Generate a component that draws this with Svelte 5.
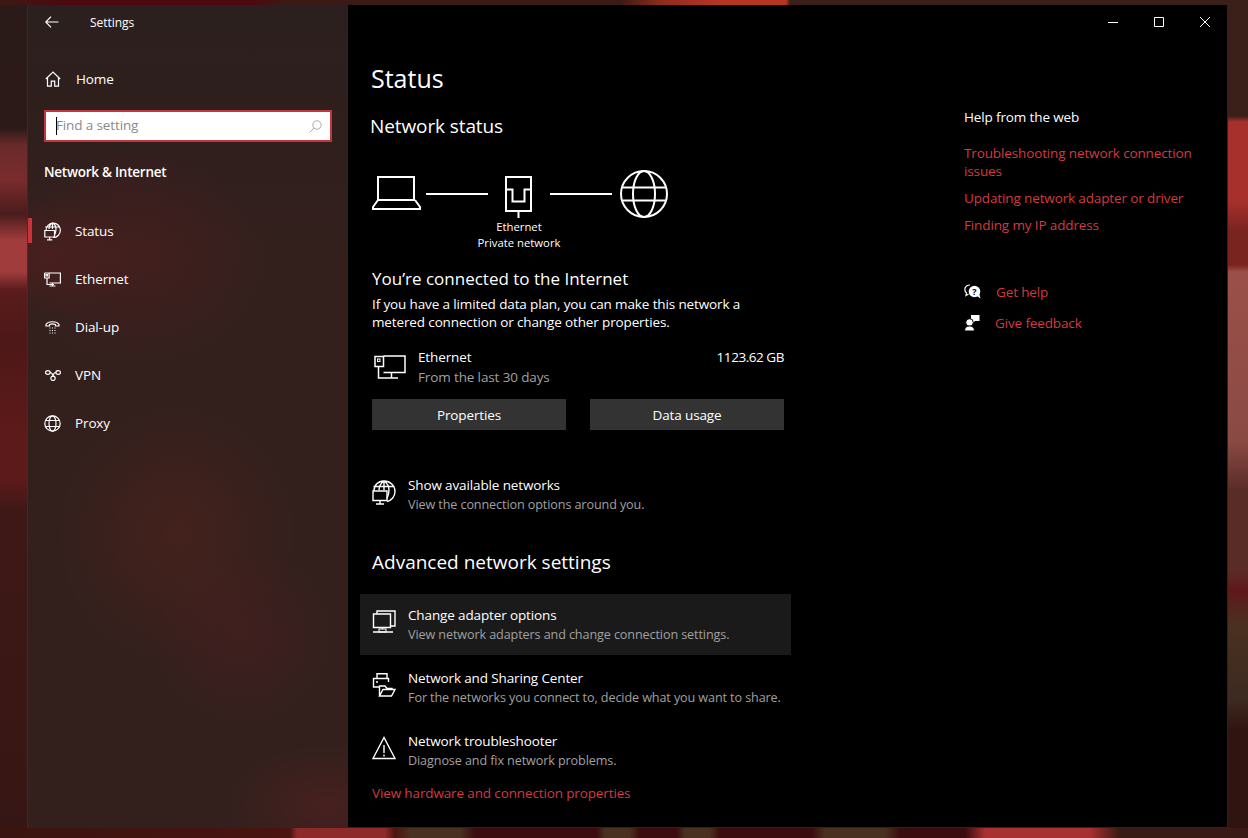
<script>
	const nav = ['Status', 'Ethernet', 'Dial-up', 'VPN', 'Proxy'];
	const links = [
		'Troubleshooting network connection issues',
		'Updating network adapter or driver',
		'Finding my IP address'
	];
</script>

<div class="desktop">
	<div class="window">
		<aside class="sidebar">
			<div class="titlebar">
				<svg class="back" width="14" height="12" viewBox="0 0 14 12"><path d="M13.5 6H1M6 .7 .8 6 6 11.3" /></svg>
				<span>Settings</span>
			</div>
			<div class="home">
				<svg width="16" height="16" viewBox="0 0 16 16"><path d="M.8 8 8 1l7.2 7M2.500 6.800v8.400h3.800v-5h3.400v5h3.800V6.800" /></svg>
				<span>Home</span>
			</div>
			<div class="search">
				<input placeholder="Find a setting" readonly />
				<i class="caret"></i>
				<svg width="13" height="13" viewBox="0 0 13 13"><circle cx="8" cy="5" r="4.200" /><path d="M5 8 .6 12.500" /></svg>
			</div>
			<h2>Network &amp; Internet</h2>
			<nav>
				{#each nav as item, i}
					<div class="nav-row" class:active={i === 0}>
						<span class="nav-icon">
							{#if i === 0}
								<svg width="17" height="19" viewBox="0 0 17 19"><path d="M2 8.500a7.200 7.200 0 1 1 7 7M1 5h15M8.500 1v6M5 7c0-3 1.500-5 3.500-6 2 1 3.500 3 3.500 6 0 2-.5 4-1.500 6" /><path d="M.8 8.500h9.700v6.500H.8zM5.600 15v2.500M3 17.800h5.300" /></svg>
							{:else if i === 1}
								<svg width="17" height="15" viewBox="0 0 17 15"><path d="M.6 1h15.800v10H5.500M.6 1v5h4.500V1M3 6v6.500h7M8.500 11v3M5.500 14h6" /><rect x="2" y="2.500" width="1.500" height="1.500" /></svg>
							{:else if i === 2}
								<svg width="15" height="14" viewBox="0 0 15 14"><path d="M1 6V4.500C3 .8 12 .8 14 4.500V6h-3.500V4.500c-1.500-.7-4.500-.7-6 0V6z" /><path class="dots" d="M4.500 8h6M4.500 10.500h6M4.500 13h6" /></svg>
							{:else if i === 3}
								<svg width="16" height="11" viewBox="0 0 16 11"><ellipse cx="2.800" cy="2.500" rx="2.300" ry="1.800" /><ellipse cx="13.200" cy="2.500" rx="2.300" ry="1.800" /><circle cx="8" cy="8.300" r="2.200" /><path d="M5 2.500c2 0 2.500 1 3 3.500M11 2.500c-2 0-2.500 1-3 3.500" /></svg>
							{:else}
								<svg width="17" height="17" viewBox="0 0 17 17"><circle cx="8.500" cy="8.500" r="7.700" /><ellipse cx="8.500" cy="8.500" rx="3.500" ry="7.700" /><path d="M1.500 5.500h14M1.500 11.500h14" /></svg>
							{/if}
						</span>
						<span>{item}</span>
					</div>
				{/each}
			</nav>
		</aside>

		<main class="panel">
			<div class="controls">
				<svg width="10" height="10" viewBox="0 0 10 10"><path d="M0 5.500h10" /></svg>
				<svg width="10" height="10" viewBox="0 0 10 10"><path d="M.5.500h9v9h-9z" /></svg>
				<svg width="10" height="10" viewBox="0 0 10 10"><path d="m0 0 10 10M10 0 0 10" /></svg>
			</div>
			<div class="columns">
				<section class="main-col">
					<h1>Status</h1>
					<h3 class="net-status">Network status</h3>

					<svg class="diagram" width="298" height="50" viewBox="0 0 298 50">
						<path d="M7 8h36v23H7zM7 31l-5 7v2h47v-2l-5-7" />
						<path d="M55 25h62M179 25h62" />
						<path d="M135 8h25v34h-25zM135 20.500h6.500v12h12v-12h6.500M147.500 42v7" />
						<circle cx="273" cy="25" r="23" />
						<ellipse cx="273" cy="25" rx="11" ry="23" />
						<path d="M252 18.500h42M252 31.500h42" />
					</svg>
					<div class="diagram-label">
						<div>Ethernet</div>
						<div>Private network</div>
					</div>

					<h4>You’re connected to the Internet</h4>
					<p class="intro">If you have a limited data plan, you can make this network a<br />metered connection or change other properties.</p>

					<div class="usage">
						<svg width="32" height="24" viewBox="0 0 32 24"><path d="M9.500 1H31v16.500H9.500M1 1.500h8.500v10H1zM4.500 11.500V23H11M17.500 17.500V23M11 23h13" /><rect x="3.500" y="4" width="2.500" height="2.500" /></svg>
						<div class="usage-text">
							<div>Ethernet</div>
							<div class="muted">From the last 30 days</div>
						</div>
						<div class="amount">1123.62 GB</div>
					</div>

					<div class="buttons">
						<button>Properties</button>
						<button>Data usage</button>
					</div>

					<div class="row show-networks">
						<svg width="24" height="25" viewBox="0 0 24 25"><path d="M2 11C2 5 6 1 12 1s11 4.500 11 10.500c0 5-3.500 9-8 10M1.500 6.500h21M12 1v9M7 10c0-4 2-7 5-9 3 2 5 5 5 9 0 3-.8 6-2 8.500" /><path d="M1 11h14v9.500H1zM8 20.500v3M4 24h8" /></svg>
						<div>
							<div class="row-title">Show available networks</div>
							<div class="muted">View the connection options around you.</div>
						</div>
					</div>

					<h3 class="advanced">Advanced network settings</h3>

					<div class="row item highlighted">
						<svg width="24" height="24" viewBox="0 0 24 24"><path d="M5 4V1h18v15h-4.500M1.500 4h17v13.500h-17zM10.500 17.500V19M1 22h20" /><rect x="7" y="19" width="7" height="3" /></svg>
						<div>
							<div class="row-title">Change adapter options</div>
							<div class="muted">View network adapters and change connection settings.</div>
						</div>
					</div>
					<div class="row item low">
						<svg width="24" height="24" viewBox="0 0 24 24"><path d="M5 6V.8h10V6M7 14H1.500V5.500h15V9M4 9h2" /><path d="M7.500 23V13H13l2 2.500h5v1M7.500 23h12l3.500-6.500H11z" /></svg>
						<div>
							<div class="row-title">Network and Sharing Center</div>
							<div class="muted">For the networks you connect to, decide what you want to share.</div>
						</div>
					</div>
					<div class="row item low">
						<svg width="24" height="24" viewBox="0 0 24 24"><path d="M12 1.500 1 22.500h22zM12 9v8M12 18.500v2" /></svg>
						<div>
							<div class="row-title">Network troubleshooter</div>
							<div class="muted">Diagnose and fix network problems.</div>
						</div>
					</div>
					<div class="link hardware">View hardware and connection properties</div>
				</section>

				<section class="help-col">
					<div class="help-title">Help from the web</div>
					{#each links as link}
						<div class="link help-link">{link}</div>
					{/each}
					<div class="support first">
						<svg width="17" height="16" viewBox="0 0 17 16"><path d="M6 1C3 1 .8 3 .8 5.500c0 1.500.7 2.600 1.700 3.400L2 11.500l2.500-1.500" /><circle class="solid" cx="10.500" cy="7.500" r="5.800" /><path class="solid" d="m13 12 3.500 2.500-1-4z" /><text x="10.500" y="10.800" text-anchor="middle">?</text></svg>
						<span class="link">Get help</span>
					</div>
					<div class="support">
						<svg width="16" height="16" viewBox="0 0 16 16"><path class="solid" d="M7 0h8.500v6H11L9 8V6H7z" /><circle class="cut" cx="5.500" cy="7.500" r="3.800" /><path class="cut" d="M.5 16c0-3.500 2-5 5-5s5 1.500 5 5z" /></svg>
						<span class="link">Give feedback</span>
					</div>
				</section>
			</div>
		</main>
	</div>
</div>

<style>
	:global(body) {
		background-color: #34150f;
		font-family: 'Open Sans', 'Noto Sans', sans-serif;
	}
	.desktop {
		box-sizing: border-box;
		width: 1248px;
		height: 838px;
		overflow: hidden;
		padding: 5px 20px 10px 27px;
		background-repeat: no-repeat;
		background-image:
			linear-gradient(90deg, #3a1a14 0, #4c0a10 60px, #4c0a10 250px, #3a1a14 290px, #3a1a14 620px, #8e2a1e 660px, #b83524 720px, #b83524 786px, #3a2018 790px, #3a2018 1248px),
			linear-gradient(90deg, #3a1410 0, #4a1410 290px, #8e2a2a 297px, #8e2a2a 385px, #4a1410 395px, #4a3020 410px, #4a3020 460px, #3a0c0e 475px, #3a0c0e 597px, #4a3020 605px, #4a3020 630px, #3a0c0e 640px, #3a0c0e 677px, #4a3020 685px, #4a3020 710px, #3a0c0e 720px, #3a0c0e 812px, #4a3020 825px, #4a3020 885px, #3a0c0e 900px, #3a0c0e 965px, #a83030 985px, #a83030 1090px, #3a1a14 1120px),
			linear-gradient(180deg, #2a1a18 0, #2c1a18 128px, #6a2a2a 145px, #7a2c2c 180px, #4a1c1c 214px, #a03c3c 240px, #a03c3c 272px, #5a1c1c 290px, #4e1818 340px, #5e1a1a 440px, #5c1a1a 480px, #3e1816 510px, #361614 838px),
			linear-gradient(180deg, #3a2018 0, #3a2018 116px, #a8302c 122px, #a8302c 200px, #7a2420 230px, #7a2420 265px, #9a5048 272px, #8a4a44 440px, #5a2c28 490px, #5a2c28 570px, #60181c 590px, #4a3020 625px, #3c2a20 700px, #301410 730px, #301410 838px);
		background-size: 1248px 5px, 1248px 10px, 27px 838px, 20px 838px;
		background-position: 0 0, 0 828px, 0 0, 1228px 0;
	}
	.window {
		display: grid;
		grid-template-columns: 321px 880px;
		height: 823px;
		color: #fff;
		font-size: 13.5px;
		letter-spacing: -0.13px;
	}
	.sidebar {
		background-color: #33201d;
		background-image:
			radial-gradient(ellipse 120px 130px at 150px 530px, rgba(80, 34, 28, 0.6), transparent),
			radial-gradient(ellipse 90px 90px at 215px 630px, rgba(72, 30, 32, 0.6), transparent),
			radial-gradient(ellipse 130px 110px at 110px 250px, rgba(82, 30, 30, 0.5), transparent),
			radial-gradient(ellipse 90px 60px at 20px 250px, rgba(90, 30, 30, 0.5), transparent),
			radial-gradient(ellipse 100px 60px at 300px 800px, rgba(90, 32, 32, 0.5), transparent),
			linear-gradient(180deg, #2b201f 0, #2f1f1d 120px, transparent 240px);
		box-shadow: inset 1px 0 rgba(255, 255, 255, 0.05);
	}
	svg {
		flex: none;
		fill: none;
		stroke: #fff;
		stroke-width: 1.2;
	}
	svg .solid {
		fill: #fff;
		stroke: none;
	}
	svg .cut {
		fill: #fff;
		stroke: #000;
		stroke-width: 1;
	}
	svg text {
		fill: #000;
		stroke: none;
		font-size: 9px;
		font-weight: 700;
		letter-spacing: 0;
	}
	svg rect {
		stroke-width: 1;
	}
	.dots {
		stroke-dasharray: 1 1.500;
	}
	.titlebar {
		display: flex;
		align-items: center;
		height: 34px;
		padding-left: 18px;
		font-size: 12px;
		letter-spacing: -0.05px;
	}
	.titlebar span {
		margin-left: 31px;
	}
	.home {
		display: flex;
		align-items: center;
		gap: 15px;
		height: 24px;
		margin-top: 28px;
		padding-left: 18px;
	}
	.search {
		position: relative;
		display: flex;
		align-items: center;
		box-sizing: border-box;
		width: 288px;
		height: 32px;
		margin: 19px 0 0 17px;
		padding: 0 8px 0 10px;
		background: #fff;
		border: 2px solid #c5343c;
	}
	.search input {
		flex: 1;
		min-width: 0;
		padding: 0 0 2px;
		border: 0;
		outline: 0;
		font: inherit;
		letter-spacing: inherit;
		background: none;
	}
	.search input::placeholder {
		color: #8a8a8a;
		opacity: 1;
	}
	.search svg {
		stroke: #aaa;
		stroke-width: 1;
	}
	.caret {
		position: absolute;
		left: 10px;
		top: 5px;
		width: 1px;
		height: 18px;
		background: #000;
	}
	h2 {
		margin: 20px 0 0 17px;
		font-size: 13.5px;
		line-height: 20px;
		font-weight: 600;
		letter-spacing: -0.25px;
	}
	nav {
		margin-top: 25px;
	}
	.nav-row {
		display: flex;
		align-items: center;
		height: 48px;
		padding-left: 17px;
		position: relative;
	}
	.nav-row.active::before {
		content: '';
		position: absolute;
		left: 1px;
		top: 11px;
		width: 4px;
		height: 25px;
		background: #c8333c;
	}
	.nav-icon {
		display: flex;
		justify-content: center;
		width: 17px;
		margin-right: 14px;
	}
	.panel {
		background: #000;
		box-shadow: inset -1px 0 #2c2422, inset 0 -1px #2c2422;
	}
	.controls {
		display: flex;
		justify-content: flex-end;
		gap: 36px;
		height: 24px;
		padding: 12px 18px 0 0;
		box-sizing: border-box;
		align-items: flex-start;
	}
	.controls svg {
		stroke-width: 1;
	}
	.columns {
		display: flex;
	}
	.main-col {
		width: 443px;
		padding-left: 12px;
	}
	h1 {
		margin: 30px 0 0 11px;
		font-size: 25px;
		line-height: 38px;
		font-weight: 400;
		letter-spacing: 0;
	}
	h3 {
		font-size: 19px;
		font-weight: 400;
		line-height: 28px;
		letter-spacing: 0;
	}
	.net-status {
		margin: 15px 0 0 10px;
		letter-spacing: -0.1px;
	}
	.diagram {
		display: block;
		margin: 29px 0 0 11px;
		stroke-width: 2;
	}
	.diagram-label {
		width: 294px;
		margin: 0 0 0 12px;
		font-size: 11.3px;
		line-height: 16px;
		text-align: center;
		letter-spacing: 0;
	}
	h4 {
		margin: 15px 0 0 12px;
		font-size: 17px;
		font-weight: 400;
		line-height: 26px;
		letter-spacing: 0;
	}
	.intro {
		margin: 3px 0 0 12px;
		line-height: 18px;
	}
	.usage {
		display: flex;
		width: 412px;
		margin: 16px 0 0 12px;
		align-items: flex-start;
	}
	.usage svg {
		margin: 8px 12px 0 2px;
		stroke-width: 1.500;
	}
	.usage-text {
		flex: 1;
		line-height: 20px;
	}
	.amount {
		line-height: 20px;
		letter-spacing: -0.45px;
	}
	.muted {
		color: #a0a0a0;
		font-size: 12.6px;
		line-height: 19px;
		letter-spacing: -0.1px;
	}
	.usage-text .muted {
		font-size: 13.5px;
		line-height: 20px;
		letter-spacing: -0.13px;
	}
	.buttons {
		display: flex;
		gap: 24px;
		margin: 12px 0 0 12px;
	}
	button {
		width: 194px;
		height: 31px;
		padding: 0;
		border: 0;
		background: #333;
		color: #fff;
		font: inherit;
		letter-spacing: inherit;
	}
	.row {
		display: flex;
		align-items: center;
		gap: 12px;
	}
	.row svg {
		stroke-width: 1.400;
		margin-bottom: 6px;
	}
	.row-title {
		line-height: 19px;
	}
	.show-networks {
		margin: 46px 0 0 12px;
	}
	.advanced {
		margin: 34px 0 0 12px;
	}
	.highlighted {
		background: #1a1a1a;
	}
	.item {
		box-sizing: border-box;
		width: 431px;
		height: 63px;
		padding-left: 12px;
		gap: 12px;
	}
	.low {
		padding-top: 2px;
	}
	.advanced + .item {
		margin-top: 18px;
		height: 61px;
	}
	.link {
		color: #d13a42;
	}
	.hardware {
		margin: 2px 0 0 12px;
		line-height: 20px;
	}
	.help-col {
		width: 240px;
		margin-left: 161px;
		padding-top: 78px;
	}
	.help-title {
		line-height: 20px;
		margin-bottom: 17px;
	}
	.help-link {
		line-height: 18px;
		margin-bottom: 9px;
	}
	.support {
		display: flex;
		align-items: center;
		gap: 15px;
		height: 24px;
		margin-bottom: 7px;
	}
	.support.first {
		margin-top: 46px;
	}
</style>
